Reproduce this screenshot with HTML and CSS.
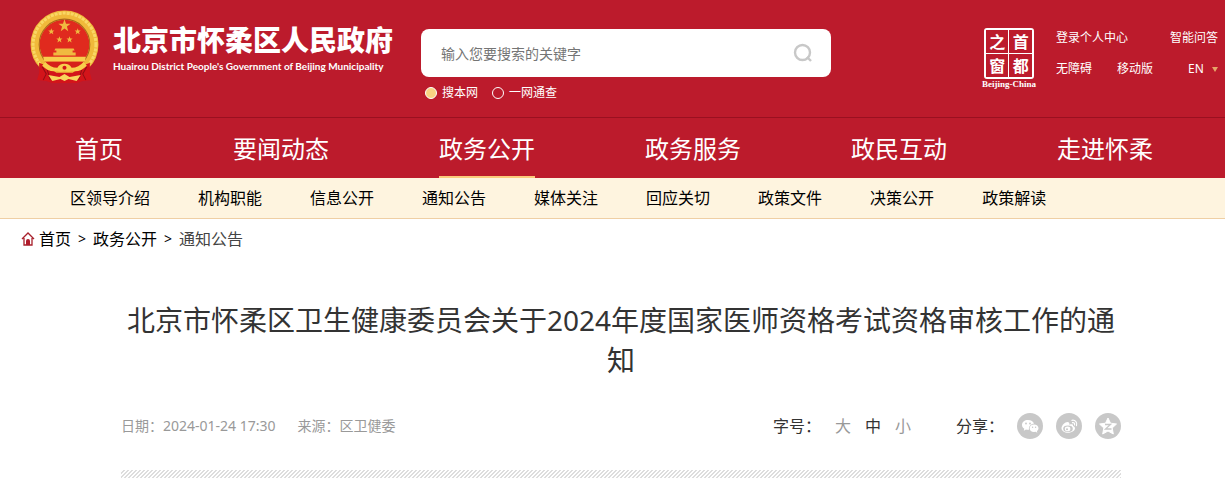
FILE: index.html
```html
<!DOCTYPE html>
<html lang="zh-CN">
<head>
  <meta charset="UTF-8">
  <meta name="viewport" content="width=device-width, initial-scale=1.0">
  <title>北京市怀柔区人民政府</title>
  <link rel="stylesheet" href="styles.css">
</head>
<body>

  <header class="header">
    <a class="brand" href="#">
      <svg class="emblem" viewBox="0 0 68 72" aria-hidden="true">
        <circle cx="34" cy="34" r="29" fill="#e02a1e" stroke="#f0b93a" stroke-width="9"/>
        <circle cx="34" cy="34" r="31" fill="none" stroke="#f9d765" stroke-width="3" stroke-dasharray="3 1"/>
        <circle cx="34" cy="34" r="25" fill="none" stroke="#a9651a" stroke-width="1"/>
        <g fill="#f0b940">
          <path d="M34 9 L35.500 13.500 L40 13.500 L36.400 16.200 L37.700 21 L34 18.200 L30.300 21 L31.600 16.200 L28 13.500 L32.500 13.500 Z"/>
          <path id="star" d="M21 18 L21.800 20.200 L24 20.200 L22.300 21.600 L23 24 L21 22.600 L19 24 L19.700 21.600 L18 20.200 L20.200 20.200 Z"/>
          <use href="#star" x="26"/>
          <use href="#star" x="8" y="8"/>
          <use href="#star" x="18" y="8"/>
          <path d="M25 38 H43 L44 40 H24 Z M26 40 H42 V42 H26 Z M23 42 H45 V45 H23 Z"/>
        </g>
        <path d="M13 46 H55 L54 51 H14 Z" fill="#f8cd4d"/>
        <path d="M14 51 H54 L48 58 H20 Z" fill="#d6201a"/>
        <path d="M9 52 L14 54 L26 62 H42 L54 54 L59 52 L59 62 L61 69 L52 70 L46 72 H22 L16 70 L7 69 L9 62 Z" fill="#d3141a"/>
        <path d="M12 56 L16 63 L13 69 M56 56 L52 63 L55 69 M17 59 L20 69 M51 59 L48 69" fill="none" stroke="#930d14" stroke-width="1"/>
        <path d="M15 51 Q20 57 27 57 Q29 53 34 53 Q39 53 41 57 Q48 57 53 51 L56 55 Q49 62 41 60 Q38 62 34 60 Q30 62 27 60 Q19 62 12 55 Z" fill="#f8ce4c"/>
        <circle cx="34" cy="57" r="2" fill="#d3141a"/>
        <path d="M18 64 L29 66 L34 63 L39 66 L50 64 L46 70 L38 68 L34 70 L30 68 L22 70 Z" fill="#f8d55c"/>
      </svg>
      <span class="brand-text">
        <span class="brand-cn">北京市怀柔区人民政府</span>
        <span class="brand-en" lang="en">Huairou District People's Government of Beijing Municipality</span>
      </span>
    </a>

    <form class="search">
      <div class="search-box">
        <input class="search-input" type="text" placeholder="输入您要搜索的关键字" aria-label="搜索">
        <button class="search-btn" type="button" aria-label="搜索">
          <svg width="20" height="20" viewBox="0 0 20 20" fill="none" stroke="#c8c8c8" stroke-width="2.400">
            <circle cx="9.500" cy="9.500" r="7.500"/>
            <path d="M14 14 L18 18"/>
          </svg>
        </button>
      </div>
      <div class="search-range">
        <label class="range"><input type="radio" name="range" checked>搜本网</label>
        <label class="range"><input type="radio" name="range">一网通查</label>
      </div>
    </form>

    <div class="tools">
      <a class="capital" href="#">
        <span class="capital-seal">
          <span>之</span><span>首</span><span>窗</span><span>都</span>
        </span>
        <span class="capital-en" lang="en">Beijing-China</span>
      </a>
      <div class="tool-links">
        <div class="tool-row">
          <a href="#">登录个人中心</a>
          <a class="last" href="#">智能问答</a>
        </div>
        <div class="tool-row">
          <a href="#">无障碍</a>
          <a href="#">移动版</a>
          <span class="lang last">
            <select class="lang-select" aria-label="语言">
              <option>EN</option>
            </select>
            <span class="lang-arrow"></span>
          </span>
        </div>
      </div>
    </div>
  </header>

  <nav class="nav">
    <a href="#">首页</a>
    <a href="#">要闻动态</a>
    <a class="active" href="#">政务公开</a>
    <a href="#">政务服务</a>
    <a href="#">政民互动</a>
    <a href="#">走进怀柔</a>
  </nav>

  <nav class="subnav">
    <a href="#">区领导介绍</a>
    <a href="#">机构职能</a>
    <a href="#">信息公开</a>
    <a href="#">通知公告</a>
    <a href="#">媒体关注</a>
    <a href="#">回应关切</a>
    <a href="#">政策文件</a>
    <a href="#">决策公开</a>
    <a href="#">政策解读</a>
  </nav>

  <div class="crumbs">
    <a class="crumb-home" href="#">
      <svg class="home" viewBox="0 0 14 14" aria-hidden="true">
        <path d="M1 7 L7 1 L13 7 M3 6 V13 H11 V6" fill="none" stroke="#a8202c" stroke-width="1.300"/>
        <path d="M5 13 V9 Q5 7 7 7 Q9 7 9 9 V13 Z" fill="#b01c2b"/>
      </svg>
      首页
    </a>
    <span>&gt;</span>
    <a href="#">政务公开</a>
    <span>&gt;</span>
    <a class="current" href="#">通知公告</a>
  </div>

  <main class="article">
    <h1 class="title">北京市怀柔区卫生健康委员会关于2024年度国家医师资格考试资格审核工作的通知</h1>

    <div class="meta">
      <span class="date">日期：2024-01-24 17:30</span>
      <span>来源：区卫健委</span>
      <div class="font-size">
        <span>字号：</span>
        <button type="button">大</button>
        <button class="on" type="button">中</button>
        <button type="button">小</button>
      </div>
      <div class="share">
        <span>分享：</span>
        <a href="#" aria-label="微信">
          <svg viewBox="0 0 26 26">
            <circle cx="13" cy="13" r="13" fill="#c8c8c8"/>
            <path d="M11 7 C7.500 7 5 9 5 12 C5 13.700 6 15 7.300 15.800 L6.800 17.800 L9 16.600 Q10.500 17 12 16.800 C11.500 13 14 10.700 17 10.700 C16.500 8.500 14 7 11 7 Z" fill="#fff"/>
            <path d="M17 11.500 C14.500 11.500 12.600 13.200 12.600 15.300 C12.600 17.500 14.500 19 17 19 L18.600 18.800 L20.300 19.800 L19.900 18 C21 17.300 21.500 16.400 21.500 15.300 C21.500 13.200 19.500 11.500 17 11.500 Z" fill="#fff"/>
            <g fill="#c8c8c8"><circle cx="9" cy="10.500" r="0.900"/><circle cx="13" cy="10.500" r="0.900"/><circle cx="15.600" cy="14.200" r="0.700"/><circle cx="18.600" cy="14.200" r="0.700"/></g>
          </svg>
        </a>
        <a href="#" aria-label="微博">
          <svg viewBox="0 0 26 26">
            <circle cx="13" cy="13" r="13" fill="#c8c8c8"/>
            <path d="M11.500 9 C9 9 5.500 12.500 5.500 15.300 C5.500 18 8.500 19.800 12 19.800 C16 19.800 19 17.600 19 15.300 C19 13.900 18 13.300 17 13 C17.400 11.300 16 10.700 13.300 11.700 C13.700 10 13 9 11.500 9 Z" fill="#fff"/>
            <ellipse cx="12" cy="15.700" rx="4.800" ry="3.200" fill="#c8c8c8"/>
            <ellipse cx="11.600" cy="15.900" rx="2.800" ry="2.300" fill="#fff"/>
            <circle cx="11" cy="16.300" r="1" fill="#c8c8c8"/>
            <path d="M16 7.300 C19.300 6.700 21.600 9.500 20.500 12.600 M16.500 9.600 C18.200 9.400 19 10.600 18.500 12" fill="none" stroke="#fff" stroke-width="1.200" stroke-linecap="round"/>
          </svg>
        </a>
        <a href="#" aria-label="QQ空间">
          <svg viewBox="0 0 26 26">
            <circle cx="13" cy="13" r="13" fill="#c8c8c8"/>
            <path d="M13 5 L15.500 10.200 L21.500 11 L17.200 15 L18.300 21 L13 18 L7.700 21 L8.800 15 L4.500 11 L10.500 10.200 Z" fill="#fff" stroke="#fff" stroke-linejoin="round"/>
            <path d="M10 11.500 H15.500 L10.500 16 H16.500" fill="none" stroke="#c8c8c8" stroke-width="1.300"/>
          </svg>
        </a>
      </div>
    </div>

    <div class="divider"></div>
  </main>

</body>
</html>
```
FILE: styles.css
```css
* {
  box-sizing: border-box;
}

body {
  margin: 0;
  background: #fff;
  color: #333;
  font-family: "Noto Sans", "Noto Sans CJK SC", sans-serif;
  font-size: 16px;
}

a {
  color: inherit;
  text-decoration: none;
}

button {
  padding: 0;
  border: none;
  background: none;
  font: inherit;
  cursor: pointer;
}

svg {
  display: block;
}

/* header */
.header {
  display: flex;
  align-items: flex-start;
  height: 118px;
  padding: 0 7px 0 30px;
  border-bottom: 1px solid #9a1020;
  background: #bc1b2c;
  color: #fff;
}

.brand {
  display: flex;
  gap: 14px;
  padding-top: 10px;
}

.emblem {
  width: 69px;
  height: 73px;
}

.brand-text {
  display: flex;
  flex-direction: column;
  width: 280px;
  padding-top: 14px;
  white-space: nowrap;
}

.brand-cn {
  font-size: 28px;
  font-weight: 900;
  line-height: 32px;
}

.brand-en {
  font-family: Lato, sans-serif;
  font-size: 10px;
  font-weight: bold;
  line-height: 20px;
}

/* search */
.search {
  width: 410px;
  margin-left: 28px;
  padding-top: 29px;
}

.search-box {
  display: flex;
  align-items: center;
  height: 48px;
  padding: 0 18px 0 20px;
  border-radius: 8px;
  background: #fff;
}

.search-input {
  flex: 1;
  padding: 0;
  border: none;
  outline: none;
  font: inherit;
  font-size: 14px;
}

.search-input::placeholder {
  color: #757575;
}

.search-range {
  display: flex;
  gap: 14px;
  padding: 6px 4px;
}

.range {
  display: flex;
  align-items: center;
  gap: 5px;
  font-size: 12px;
  line-height: 20px;
}

.range input {
  appearance: none;
  width: 12px;
  height: 12px;
  margin: 0;
  border: 1px solid #fff;
  border-radius: 50%;
}

.range input:checked {
  background: #f8d282;
}

/* right side tools */
.tools {
  display: flex;
  gap: 20px;
  margin-left: auto;
  padding-top: 28px;
}

.capital {
  display: flex;
  flex-direction: column;
  align-items: center;
}

.capital-seal {
  display: grid;
  grid-template-columns: 1fr 1fr;
  gap: 1px;
  width: 50px;
  border: 2px solid #fff;
  border-radius: 3px;
  background: #fff;
  font-family: "Noto Sans CJK SC", sans-serif;
  font-size: 16px;
  font-weight: bold;
  line-height: 23px;
  text-align: center;
}

.capital-seal span {
  background: #bc1b2c;
}

.capital-en {
  font-family: "Liberation Serif", serif;
  font-size: 9px;
  font-weight: bold;
  line-height: 10px;
}

.tool-links {
  width: 162px;
  font-size: 12px;
}

.tool-row {
  display: flex;
  gap: 25px;
  height: 31px;
  line-height: 20px;
}

.tool-row .last {
  margin-left: auto;
}

.lang {
  display: flex;
  align-items: center;
  gap: 8px;
  height: 20px;
}

.lang-select {
  appearance: none;
  padding: 0;
  border: none;
  background: none;
  color: #fff;
  font: inherit;
}

.lang-arrow {
  border: 3px solid transparent;
  border-top: 5px solid #e5a668;
  border-bottom: none;
}

/* navigation */
.nav {
  display: flex;
  gap: 110px;
  padding-left: 75px;
  background: #bc1b2c;
  color: #fff;
  font-size: 24px;
  line-height: 62px;
  white-space: nowrap;
}

.nav a {
  height: 60px;
}

.nav .active {
  border-bottom: 2px solid #fbca7b;
}

.subnav {
  display: flex;
  gap: 48px;
  padding-left: 70px;
  border-bottom: 1px solid #efcfa4;
  background: #fef4df;
  color: #000;
  line-height: 40px;
  white-space: nowrap;
}

.crumbs {
  display: flex;
  align-items: center;
  gap: 7px;
  padding-left: 21px;
  color: #000;
  line-height: 40px;
}

.crumbs span {
  font-size: 14px;
}

.crumbs .current {
  color: #444;
}

.crumb-home {
  display: flex;
  align-items: center;
  gap: 4px;
}

.home {
  width: 14px;
  height: 14px;
}

/* article */
.article {
  padding: 41px 104px 0 121px;
}

.title {
  margin: 0;
  font-size: 28px;
  font-weight: normal;
  line-height: 40px;
  text-align: center;
}

.meta {
  display: flex;
  align-items: center;
  margin-top: 32px;
  color: #999;
  font-size: 14px;
  line-height: 28px;
}

.date {
  margin-right: 22px;
}

.font-size,
.share {
  display: flex;
  align-items: center;
  color: #333;
  font-size: 16px;
}

.font-size {
  gap: 14px;
  margin-left: auto;
}

.font-size button {
  color: #999;
}

.font-size .on {
  color: #333;
}

.share {
  gap: 13px;
  margin-left: 45px;
}

.share svg {
  width: 26px;
  height: 26px;
}

.divider {
  height: 8px;
  margin-top: 30px;
  background-image: linear-gradient(135deg, #fff 25%, #ddd 25%, #ddd 50%, #fff 50%, #fff 75%, #ddd 75%);
  background-size: 4px 4px;
}
```
